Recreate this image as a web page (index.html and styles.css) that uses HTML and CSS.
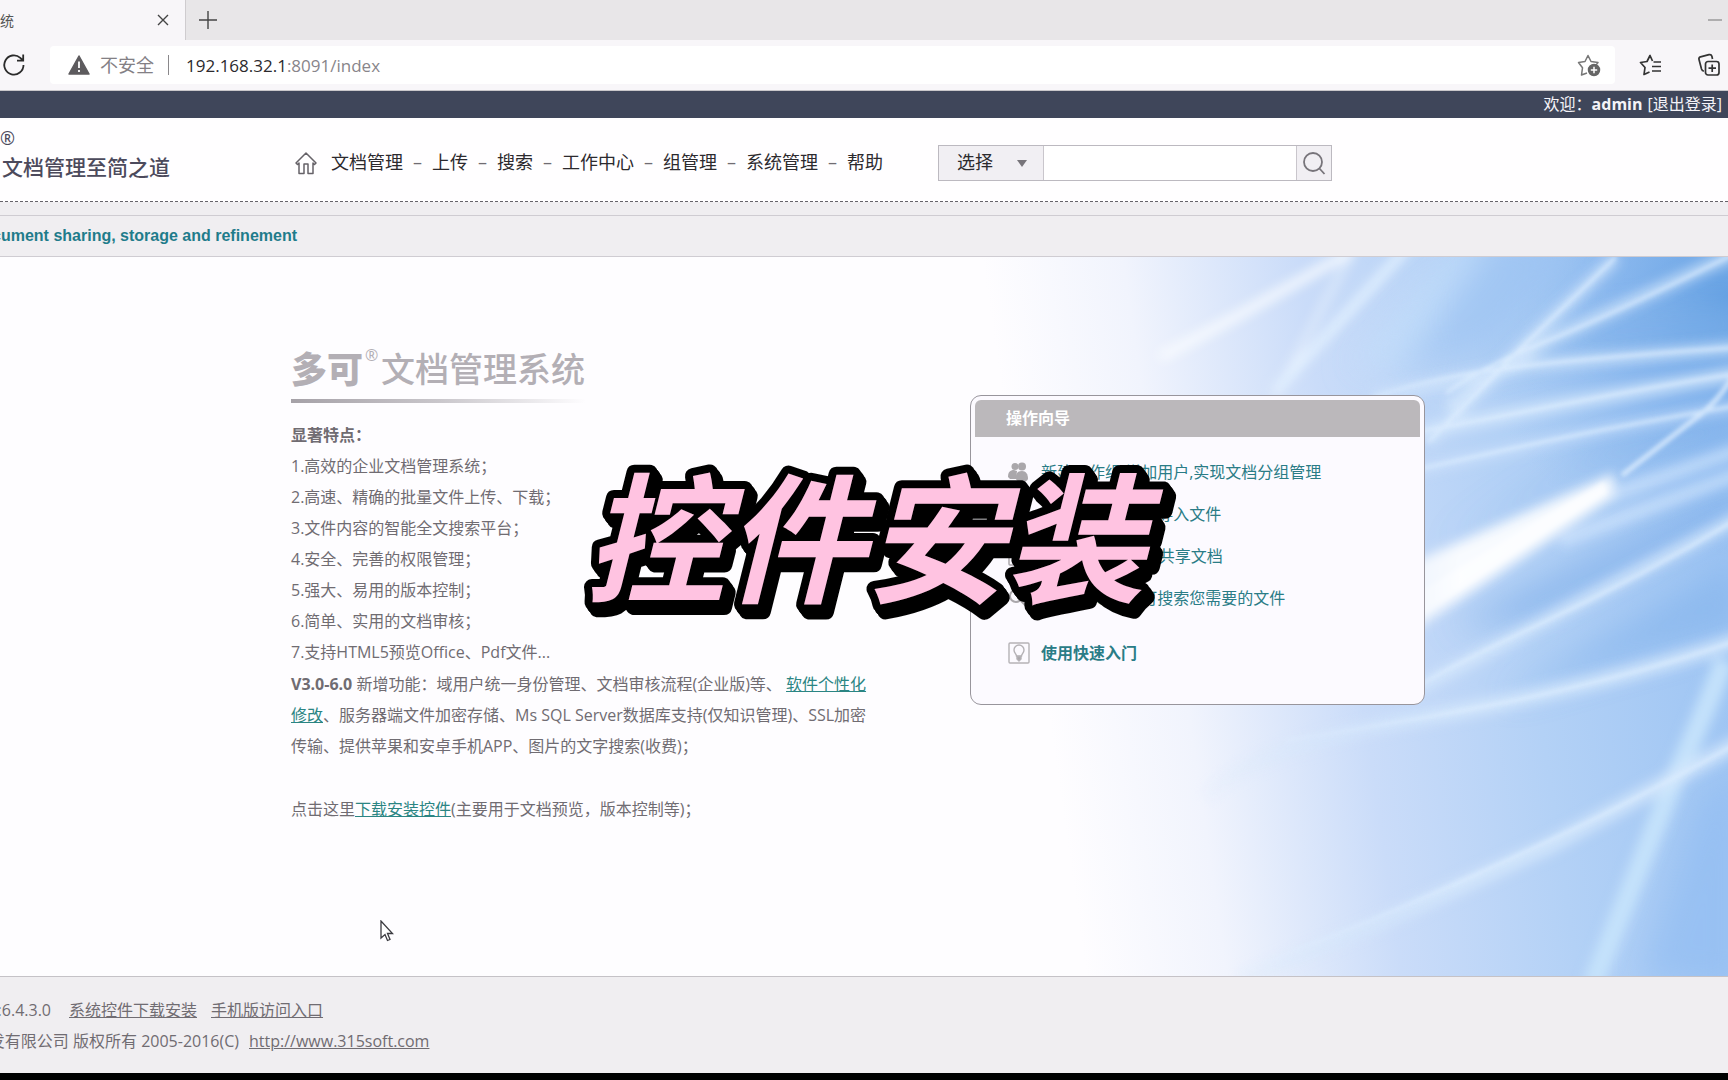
FILE: index.html
```html
<!DOCTYPE html>
<html lang="zh-CN">
<head>
<meta charset="utf-8">
<title>多可文档管理系统</title>
<link rel="stylesheet" href="styles.css">
</head>
<body>
<div class="tabs">
  <div class="tab">
    <span class="tab-title">管理系统</span>
    <button class="icon-btn" aria-label="关闭标签页"><svg width="12" height="12" viewBox="0 0 12 12"><path d="M1 1l10 10M11 1L1 11" stroke="#444" stroke-width="1.4"/></svg></button>
  </div>
  <button class="icon-btn new-tab" aria-label="新建标签页"><svg width="18" height="18" viewBox="0 0 18 18"><path d="M9 0v18M0 9h18" stroke="#444" stroke-width="1.4"/></svg></button>
  <button class="icon-btn minimize" aria-label="最小化"><svg width="14" height="4" viewBox="0 0 14 4"><path d="M0 2h14" stroke="#888" stroke-width="1.2"/></svg></button>
</div>

<div class="toolbar">
  <button class="icon-btn reload" aria-label="刷新"><svg width="24" height="24" viewBox="0 0 24 24" fill="none" stroke="#2b2b2b" stroke-width="1.8"><path d="M21.5 12a9.6 9.6 0 1 1-3.2-7.2L21 7.500M21.200 1.500v6.200h-6.200"/></svg></button>
  <div class="address">
    <svg width="22" height="20" viewBox="0 0 22 20"><path d="M11 1L21 19H1z" fill="#5d5b5e" stroke="#5d5b5e" stroke-width="1.500" stroke-linejoin="round"/><path d="M11 6.500v6.500M11 15v2" stroke="#fff" stroke-width="1.800"/></svg>
    <span class="insecure">不安全</span>
    <span class="divider"></span>
    <span class="url"><b>192.168.32.1</b>:8091/index</span>
    <button class="icon-btn add-fav" aria-label="添加收藏"><svg width="24" height="24" viewBox="0 0 24 24" fill="none" stroke="#777" stroke-width="1.500" stroke-linejoin="round"><path d="M10 20l-5.500 2 1-7.200L1.500 9.500 8 8.500l3-6 3 6 7 1-2 2.500"/><circle cx="17" cy="17" r="5.500" fill="#666" stroke="#666"/><path d="M17 13.800v6.400M13.800 17h6.400" stroke="#fff"/></svg></button>
  </div>
  <button class="icon-btn" aria-label="收藏夹"><svg width="24" height="24" viewBox="0 0 24 24" fill="none" stroke="#333" stroke-width="1.700" stroke-linejoin="round"><path d="M13.500 8L11 2.500 8 8.500l-6.500 1 4.500 5-1 7 5.500-2.500M14.500 9H22M13 13.500h9M13 18h9"/></svg></button>
  <button class="icon-btn" aria-label="集锦"><svg width="24" height="24" viewBox="0 0 24 24" fill="none" stroke="#333" stroke-width="1.700"><rect x="8.500" y="8.500" width="13.500" height="13.500" rx="2.500"/><path d="M15.200 11.500v7.500M11.500 15.200H19M7 18c-1.500.2-2-.6-2.500-2L2 6.500C1.600 5 2.400 4.200 3.500 3.800L12 1.700c1.500-.4 2.500.3 2.900 1.500L15.500 6"/></svg></button>
</div>

<div class="userbar"><span>欢迎：</span><strong>admin</strong><a href="#logout">[退出登录]</a></div>

<header class="header">
  <div class="brand">
    <span class="reg">®</span>
    <span class="slogan">文档管理至简之道</span>
  </div>
  <nav class="nav">
    <a class="home" href="#home" aria-label="首页"><svg width="22" height="24" viewBox="0 0 22 24" fill="none" stroke="#666268" stroke-width="1.500" stroke-linejoin="round"><path d="M1 12L11 2l10 10-1.500 1.500L18 12v10.500h-5V13H9v9.500H4V12l-1.500 1.500z"/></svg></a>
    <a href="#docs">文档管理</a><i>–</i>
    <a href="#upload">上传</a><i>–</i>
    <a href="#search">搜索</a><i>–</i>
    <a href="#work">工作中心</a><i>–</i>
    <a href="#groups">组管理</a><i>–</i>
    <a href="#system">系统管理</a><i>–</i>
    <a href="#help">帮助</a>
  </nav>
  <form class="search">
    <div class="scope">
      <select aria-label="搜索范围"><option>选择</option></select>
      <svg class="caret" width="10" height="7" viewBox="0 0 10 7"><path d="M0 0h10L5 7z" fill="#77747a"/></svg>
    </div>
    <input type="text" aria-label="搜索关键词">
    <button type="button" aria-label="搜索"><svg width="24" height="24" viewBox="0 0 24 24" fill="none" stroke="#77747a" stroke-width="1.800"><circle cx="11" cy="11" r="9"/><path d="M17 17l5.500 6"/></svg></button>
  </form>
</header>

<div class="strip"><p>Document sharing, storage and refinement</p></div>

<main class="hero">
  <svg class="rays" viewBox="0 0 1728 718" preserveAspectRatio="none" aria-hidden="true">
    <defs>
      <linearGradient id="sky" gradientUnits="userSpaceOnUse" x1="1040" y1="400" x2="1728" y2="300">
        <stop offset="0" stop-color="#fefdff"/><stop offset=".2" stop-color="#f1f4fd"/><stop offset=".45" stop-color="#cadcf9"/><stop offset=".7" stop-color="#b3d1f6"/><stop offset="1" stop-color="#9dc4f3"/>
      </linearGradient>
      <radialGradient id="deep" gradientUnits="userSpaceOnUse" cx="1728" cy="40" r="260">
        <stop offset="0" stop-color="#5b9be0" stop-opacity=".85"/><stop offset=".5" stop-color="#74aae9" stop-opacity=".5"/><stop offset="1" stop-color="#8fbdf0" stop-opacity="0"/>
      </radialGradient>
      <linearGradient id="fade" gradientUnits="userSpaceOnUse" x1="1160" y1="0" x2="1460" y2="0">
        <stop offset="0" stop-color="#fff" stop-opacity="0"/><stop offset="1" stop-color="#fff"/>
      </linearGradient>
      <mask id="edge" maskUnits="userSpaceOnUse" x="1100" y="-10" width="640" height="740"><rect x="1100" y="-10" width="640" height="740" fill="url(#fade)"/></mask>
      <filter id="b2" filterUnits="userSpaceOnUse" x="1000" y="-60" width="800" height="840"><feGaussianBlur stdDeviation="2"/></filter>
      <filter id="b6" filterUnits="userSpaceOnUse" x="1000" y="-60" width="800" height="840"><feGaussianBlur stdDeviation="6"/></filter>
      <filter id="b16" filterUnits="userSpaceOnUse" x="900" y="-100" width="960" height="940"><feGaussianBlur stdDeviation="16"/></filter>
    </defs>
    <rect width="1728" height="718" fill="url(#sky)"/>
    <rect x="1400" width="328" height="400" fill="url(#deep)"/>
    <g mask="url(#edge)">
      <g filter="url(#b16)">
        <path d="M1480 -20h110L1490 90l-100 30z" fill="#9cc3f2" opacity=".7"/>
        <path d="M1470 -20h20L1400 110h-50z" fill="#c4e0fb" opacity=".8"/>
        <path d="M1440 290L1600 190 1728 160v20L1590 210z" fill="#7fb0ea" opacity=".5"/>
        <path d="M1450 370L1740 235v25L1530 360z" fill="#7dade9" opacity=".8"/>
        <path d="M1500 440L1740 300v70L1600 410z" fill="#86b5ed" opacity=".7"/>
        <path d="M1640 720L1700 540l40-30v220z" fill="#8fbaf2" opacity=".6"/>
        <path d="M1440 135L1600 60 1740 50v30L1560 95z" fill="#7db0ea" opacity=".5"/>
      </g>
      <g filter="url(#b6)" fill="none" stroke="#d6e8fd">
        <path d="M1725 403Q1690 490 1675 520L1592 728" stroke-width="20" stroke="#c5e2fb"/>
        <path d="M1740 -6L1549 83 1446 150" stroke-width="11" opacity=".8"/>
        <path d="M1616 0L1526 86 1428 185" stroke-width="11" opacity=".8"/>
        <path d="M1740 90L1530 108 1373 140" stroke-width="11" opacity=".8"/>
        <path d="M1740 116L1568 146 1410 176" stroke-width="14" opacity=".8"/>
        <path d="M1740 148L1606 172 1410 214" stroke-width="10" opacity=".6"/>
        <path d="M1740 192L1610 238M1740 216L1560 284" stroke-width="12" opacity=".7"/>
        <path d="M1740 260L1541 366 1410 434" stroke-width="14" opacity=".8"/>
        <path d="M1740 382Q1600 430 1423 460T1205 540" stroke-width="16" opacity=".8"/>
        <path d="M1740 484L1549 588 1377 666 1239 722" stroke-width="16" opacity=".8"/>
      </g>
      <path d="M1614 216L1410 306V375L1614 240z" fill="#fff" filter="url(#b6)" opacity=".9"/>
      <g filter="url(#b2)">
        <path d="M1604 224L1410 340V366L1606 236z" fill="#fff" opacity=".6"/>
        <g fill="none" stroke="#e0effe" stroke-width="3" opacity=".8">
          <path d="M1740 -6Q1620 54 1549 83T1446 136"/>
          <path d="M1616 0L1526 86 1428 185"/>
          <path d="M1740 90Q1620 98 1530 108T1373 140"/>
          <path d="M1740 116Q1660 128 1568 146T1410 176"/>
          <path d="M1740 108Q1720 142 1702 156L1622 218" stroke-width="5"/>
          <path d="M1740 148Q1680 158 1606 172T1410 214"/>
          <path d="M1740 260Q1640 320 1541 366T1410 434"/>
          <path d="M1740 382Q1600 430 1423 460T1300 480"/>
          <path d="M1740 484Q1640 540 1549 583T1377 660 1239 713"/>
        </g>
      </g>
    </g>
    <g filter="url(#b6)" fill="none" stroke="#fbfdff">
      <path d="M1352 -6L1235 60 1160 100" stroke-width="8"/>
      <path d="M1352 -6L1275 140" stroke-width="6" opacity=".5"/>
      <path d="M1408 -10L1275 134" stroke-width="9" stroke="#e4f2fe"/>
    </g>
  </svg>

  <section class="intro">
    <h1><span class="logo">多可</span><sup>®</sup><span>文档管理系统</span></h1>
    <h2>显著特点：</h2>
    <ul class="features">
      <li>1.高效的企业文档管理系统；</li>
      <li>2.高速、精确的批量文件上传、下载；</li>
      <li>3.文件内容的智能全文搜索平台；</li>
      <li>4.安全、完善的权限管理；</li>
      <li>5.强大、易用的版本控制；</li>
      <li>6.简单、实用的文档审核；</li>
      <li>7.支持HTML5预览Office、Pdf文件...</li>
    </ul>
    <p class="news"><strong>V3.0-6.0</strong> 新增功能：域用户统一身份管理、文档审核流程(企业版)等、 <a href="#custom">软件个性化修改</a>、服务器端文件加密存储、Ms SQL Server数据库支持(仅知识管理)、SSL加密传输、提供苹果和安卓手机APP、图片的文字搜索(收费)；</p>
    <p class="download">点击这里<a href="#plugin">下载安装控件</a>(主要用于文档预览，版本控制等)；</p>
  </section>

  <aside class="guide">
    <h2>操作向导</h2>
    <ul>
      <li><svg width="20" height="20" viewBox="0 0 20 20" fill="#aaa7ab"><circle cx="7" cy="4.500" r="3.500"/><circle cx="14" cy="4.500" r="4"/><path d="M0 15c0-5 2-7 6-7l3 1-1 8H2z"/><path d="M8 17c-1-6 2-8 6-8s6 3 6 8c-1 4-11 4-12 0z"/></svg><a href="#g1">新建工作组,增加用户,实现文档分组管理</a></li>
      <li><svg width="20" height="20" viewBox="0 0 20 20" fill="none" stroke="#aaa7ab" stroke-width="1.500"><path d="M3 1h10l4 4v14H3zM13 1v5h4M10 16V9M7 12l3-3 3 3"/></svg><a href="#g2">上传文件,或批量导入文件</a></li>
      <li><svg width="20" height="20" viewBox="0 0 20 20" fill="none" stroke="#aaa7ab" stroke-width="1.500"><rect x="1" y="1" width="18" height="18" rx="1"/><path d="M5 6h10M5 10h10M5 14h10"/></svg><a href="#g3">使用工作组管理/共享文档</a></li>
      <li><svg width="20" height="20" viewBox="0 0 20 20" fill="none" stroke="#aaa7ab" stroke-width="2"><circle cx="8" cy="8" r="6"/><path d="M12 12l7 7"/></svg><a href="#g4">通过全文检索,可搜索您需要的文件</a></li>
      <li class="quick"><svg width="22" height="22" viewBox="0 0 22 22" fill="none" stroke="#b5b2b6" stroke-width="1.400"><rect x="1" y="1" width="20" height="20" rx="1"/><path d="M8.500 14c0-2-2.500-3-2.500-6a5 5 0 0 1 10 0c0 3-2.500 4-2.500 6z"/><path d="M9 14.500h4v2.500l-2 2-2-2z" fill="#aaa7ab"/></svg><a href="#quick">使用快速入门</a></li>
    </ul>
  </aside>
</main>

<footer class="footer">
  <div class="row"><span class="version">版本:6.4.3.0</span><a href="#controls">系统控件下载安装</a><a href="#mobile">手机版访问入口</a></div>
  <div class="row"><span class="rights">软件开发有限公司 版权所有 2005-2016(C)</span><a href="#site">http://www.315soft.com</a></div>
</footer>

<div class="caption"><svg width="640" height="180" viewBox="0 0 640 180"><text x="321" y="145" text-anchor="middle">控件安装</text></svg></div>
<svg class="cursor" width="14" height="22" viewBox="0 0 14 22"><path d="M1 1v17l4-3.500L7.500 20.500l2.500-1-2.500-6h5z" fill="#fff" stroke="#3b3b40" stroke-width="1.300"/></svg>
</body>
</html>
```
FILE: styles.css
```css
* { box-sizing: border-box; }

body {
  margin: 0;
  min-height: 100vh;
  display: flex;
  flex-direction: column;
  position: relative;
  overflow-x: hidden;
  border-bottom: 7px solid #000;
  background: #f0eef1;
  color: #706c72;
  font: 16px/31px "Open Sans", "Noto Sans CJK SC", sans-serif;
}

h1, h2, p, ul { margin: 0; padding: 0; }
ul { list-style: none; }
svg { display: block; flex: none; }

.icon-btn {
  padding: 0;
  border: 0;
  background: none;
}

/* Browser frame */
.tabs {
  display: flex;
  align-items: center;
  height: 40px;
  padding-right: 6px;
  background: #e8e6e8;
}
.tab {
  display: flex;
  align-items: center;
  justify-content: space-between;
  width: 186px;
  height: 40px;
  padding-right: 16px;
  background: #f8f6f9;
  border-right: 1px solid #cfcccf;
}
.tab-title {
  display: flex;
  justify-content: flex-end;
  width: 14px;
  font-size: 14px;
  white-space: nowrap;
  color: #555;
}
.new-tab { margin-left: 13px; }
.minimize { margin-left: auto; }

.toolbar {
  display: flex;
  align-items: center;
  gap: 34px;
  height: 51px;
  padding: 0 7px 0 2px;
  background: #f8f6f9;
  border-bottom: 1px solid #c9c7ca;
}
.reload { margin-right: -10px; }
.address {
  flex: 1;
  display: flex;
  align-items: center;
  height: 38px;
  padding: 0 14px 0 18px;
  margin-right: -10px;
  border-radius: 4px;
  background: #fff;
  font-size: 17px;
}
.insecure { margin-left: 10px; font-size: 18px; color: #838085; }
.divider { width: 1px; height: 20px; margin: 0 17px 0 14px; background: #8a888b; }
.url { color: #88858a; }
.url b { font-weight: 400; color: #2c2a2d; }
.add-fav { margin-left: auto; }

/* Site header */
.userbar {
  display: flex;
  justify-content: flex-end;
  gap: 5px;
  padding-right: 6px;
  line-height: 27px;
  height: 27px;
  background: #3f465a;
  color: #f4f3f8;
}
.userbar span { margin-right: -5px; }
.userbar a { color: inherit; text-decoration: none; }

.header {
  display: flex;
  align-items: center;
  height: 84px;
  padding-top: 6px;
  background: #fffeff;
  border-bottom: 1px dashed #66636a;
}
.brand {
  display: flex;
  flex-direction: column;
  align-self: flex-start;
  width: 295px;
  color: #4c4a5c;
}
.reg { font-size: 18px; line-height: 28px; }
.slogan { padding-left: 2px; font-size: 21px; font-weight: 500; line-height: 30px; }

.nav {
  display: flex;
  align-items: center;
  width: 643px;
  font-size: 18px;
}
.nav a { color: #2c2a2e; text-decoration: none; white-space: nowrap; }
.nav i { width: 29px; font-style: normal; text-align: center; }
.home { margin-right: 14px; }

.search { display: flex; height: 36px; border: 1px solid #bcb9c0; }
.scope { position: relative; width: 105px; border-right: 1px solid #c9c6cc; }
.scope select {
  appearance: none;
  width: 100%;
  height: 100%;
  padding: 0 18px;
  border: 0;
  border-radius: 0;
  background: #f1eff3;
  color: #2c2a2e;
  font: inherit;
  font-size: 18px;
}
.caret { position: absolute; right: 16px; top: 14px; }
.search input { width: 252px; padding: 0 8px; border: 0; background: #fff; font: inherit; }
.search button {
  width: 35px;
  padding: 0 0 0 5px;
  border: 0;
  border-left: 1px solid #c9c6cc;
  background: #f1eff3;
}

.strip {
  margin-top: 13px;
  height: 42px;
  border: solid #cfccd2;
  border-width: 1px 0;
  background: #f0eef1;
  color: #1f7c8b;
  font: bold 16px/40px "Liberation Sans", sans-serif;
}
.strip p { display: flex; justify-content: flex-end; width: 297px; white-space: nowrap; }

/* Hero */
.hero {
  flex: 1;
  position: relative;
  display: flex;
  align-items: flex-start;
  padding: 83px 0 32px 291px;
}
.rays { position: absolute; inset: 0; width: 100%; height: 100%; }
.intro { position: relative; width: 588px; margin-right: 91px; }
.intro h1 {
  display: flex;
  align-items: center;
  width: 294px;
  height: 63px;
  margin-bottom: 17px;
  border-bottom: 4px solid;
  border-image: linear-gradient(90deg, #a5a1a7, #c9c6cb 50%, #fefdff) 1;
  color: #b3afb5;
  font-size: 34px;
  font-weight: 500;
  white-space: nowrap;
}
.intro h1 .logo { font-size: 36px; font-weight: 900; }
.intro h1 sup { align-self: flex-start; width: 18px; padding-left: 2px; font-size: 16px; font-weight: 400; }
.intro h2 { font-size: 16px; font-weight: 700; }
.news { margin-top: 1px; }
.download { margin-top: 32px; }
.intro a { color: #2b8583; }

.guide {
  position: relative;
  width: 455px;
  height: 310px;
  margin-top: 55px;
  padding: 4px;
  border: 1px solid #98959c;
  border-radius: 11px;
  background: #fcfaff;
}
.guide h2 {
  padding-left: 31px;
  border-radius: 6px 6px 0 0;
  background: #bbb8bb;
  color: #fff;
  font-size: 16px;
  line-height: 37px;
}
.guide ul { padding: 14px 0 0 33px; }
.guide li { display: flex; align-items: center; gap: 13px; height: 42px; }
.guide a { color: #2a7c86; text-decoration: none; white-space: nowrap; }
.guide .quick { margin-top: 13px; gap: 11px; font-weight: 700; }

/* Footer */
.footer { height: 97px; padding-top: 18px; border-top: 1px solid #c5c2c7; }
.row { display: flex; gap: 14px; }
.row a { color: inherit; }
.row span { display: flex; justify-content: flex-end; white-space: nowrap; }
.row .version { width: 55px; padding-right: 4px; }
.row .rights { width: 239px; margin-right: -4px; }

/* Caption over the page */
.caption {
  position: absolute;
  inset: 0;
  display: grid;
  place-items: center;
  pointer-events: none;
}
.caption text {
  font: italic 700 140px "Noto Sans CJK SC", sans-serif;
  fill: #ffc3e1;
  stroke: #000;
  stroke-width: 16px;
  stroke-linejoin: round;
  paint-order: stroke;
}
.caption svg { overflow: visible; filter: drop-shadow(3px 4px 0 #000) drop-shadow(2px 3px 0 #000); }
.cursor { position: absolute; left: 380px; top: 920px; }
```
